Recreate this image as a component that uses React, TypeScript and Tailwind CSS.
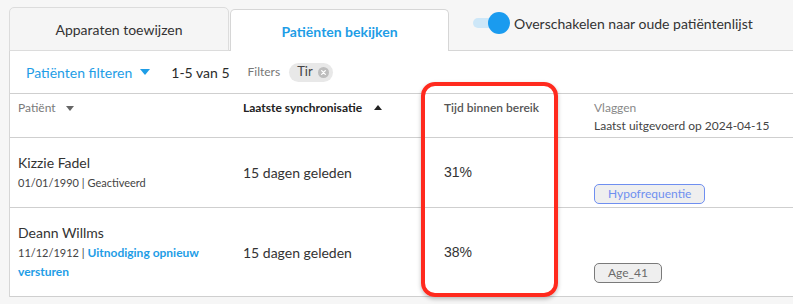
import React from "react";

const blue = "text-[#1e9de6]";

function CaretDown({ className }: { className?: string }) {
  return (
    <svg viewBox="0 0 10 6" className={className} fill="currentColor">
      <path d="M0 0h10L5 6z" />
    </svg>
  );
}

function CaretUp({ className }: { className?: string }) {
  return (
    <svg viewBox="0 0 10 6" className={className} fill="currentColor">
      <path d="M0 6h10L5 0z" />
    </svg>
  );
}

function Flag({ label, tone }: { label: string; tone: "blue" | "gray" }) {
  const cls =
    tone === "blue"
      ? "border-[#6f8ff0] text-[#6f8ff0]"
      : "border-[#7a7a7a] text-[#6a6a6a]";
  return (
    <span
      className={`inline-flex h-[20px] items-center rounded-[5px] border bg-[#efefef] px-[13px] text-[12px] ${cls}`}
    >
      {label}
    </span>
  );
}

const patients = [
  {
    name: "Kizzie Fadel",
    dob: "01/01/1990",
    status: "Geactiveerd",
    invite: false,
    sync: "15 dagen geleden",
    tir: "31%",
    flag: { label: "Hypofrequentie", tone: "blue" as const },
    height: "h-[70px]",
  },
  {
    name: "Deann Willms",
    dob: "11/12/1912",
    status: "Uitnodiging opnieuw versturen",
    invite: true,
    sync: "15 dagen geleden",
    tir: "38%",
    flag: { label: "Age_41", tone: "gray" as const },
    height: "h-[89px]",
  },
];

export default function App() {
  return (
    <div
      className="h-[304px] w-[793px] overflow-hidden bg-[#f6f6f6] pl-[9px] text-[#333]"
      style={{ fontFamily: "Lato, 'Noto Sans', sans-serif" }}
    >
      {/* Tabs */}
      <div className="flex h-[51px] items-end border-b border-[#d6d6d6]">
        <div className="-mb-px flex h-[44px] w-[220px] items-center justify-center rounded-t-[5px] border border-[#dcdcdc] bg-[#f5f5f5] text-[14px] text-[#333]">
          Apparaten toewijzen
        </div>
        <div
          className={`-mb-px ml-px flex h-[42px] w-[219px] items-center justify-center rounded-t-[5px] border border-b-0 border-[#d6d6d6] bg-white pt-px text-[14px] font-bold ${blue}`}
        >
          Patiënten bekijken
        </div>
        <div className="mb-[16px] ml-[24px] flex items-center self-end">
          <div className="relative h-[22px] w-[38px]">
            <div className="absolute left-0 top-[6px] h-[10px] w-[30px] rounded-full bg-[#cde7f8]" />
            <div className="absolute left-[15px] top-0 h-[22px] w-[22px] rounded-full bg-[#1a9bef]" />
          </div>
          <span className="ml-[3px] text-[14px] text-[#333]">
            Overschakelen naar oude patiëntenlijst
          </span>
        </div>
      </div>

      {/* Panel */}
      <div className="border-l border-[#d6d6d6] bg-white">
        {/* Filter row */}
        <div className="flex h-[43px] items-center border-b border-[#cfcfcf] pl-[16px]">
          <span className={`text-[14px] ${blue}`}>Patiënten filteren</span>
          <CaretDown className={`ml-[8px] h-[6px] w-[10px] ${blue}`} />
          <span className="ml-[21px] text-[14px] text-[#2a2a2a]">1-5 van 5</span>
          <span className="ml-[18px] text-[12px] text-[#777]">Filters</span>
          <span className="ml-[9px] inline-flex h-[19px] items-center rounded-full bg-[#e8e8e8] pl-[8px] pr-[4px] text-[13px] text-[#444]">
            Tir
            <svg viewBox="0 0 12 12" className="ml-[5px] h-[11px] w-[11px]">
              <circle cx="6" cy="6" r="6" fill="#bdbdbd" />
              <path d="M4 4l4 4M8 4l-4 4" stroke="#fff" strokeWidth="1.4" strokeLinecap="round" />
            </svg>
          </span>
        </div>

        {/* Table */}
        <div className="relative">
          <div className="grid h-[44px] grid-cols-[233px_201px_150px_1fr] border-b border-[#cfcfcf] pt-[5px] text-[12px] leading-[18px]">
            <div className="flex items-start pl-[8px]">
              <span className="text-[#7a7a7a]">Patiënt</span>
              <CaretDown className="ml-[10px] mt-[7px] h-[5px] w-[8px] text-[#666]" />
            </div>
            <div className="flex items-start">
              <span className="font-bold text-[#222]">Laatste synchronisatie</span>
              <CaretUp className="ml-[12px] mt-[6px] h-[5px] w-[8px] text-[#222]" />
            </div>
            <div className="font-semibold text-[#555]">Tijd binnen bereik</div>
            <div>
              <div className="text-[#888]">Vlaggen</div>
              <div className="text-[#444]">Laatst uitgevoerd op 2024-04-15</div>
            </div>
          </div>

          {patients.map((p) => (
            <div
              key={p.name}
              className={`grid grid-cols-[233px_201px_150px_1fr] border-b border-[#cfcfcf] ${p.height}`}
            >
              <div className="flex flex-col justify-center pl-[8px] pr-[28px]">
                <div className="text-[14px] leading-5 text-[#333]">{p.name}</div>
                <div className="text-[11px] leading-[19px] text-[#444]">
                  {p.dob} |{" "}
                  {p.invite ? (
                    <span className={`text-[12px] font-bold ${blue}`}>{p.status}</span>
                  ) : (
                    p.status
                  )}
                </div>
              </div>
              <div className="flex items-center text-[14px] text-[#333]">{p.sync}</div>
              <div
                className="flex items-center text-[14px] text-[#333]"
                style={{ fontFamily: "'Liberation Sans', Arial, sans-serif" }}
              >
                {p.tir}
              </div>
              <div className="flex items-center">
                <div className="pt-[38px]">
                  <Flag label={p.flag.label} tone={p.flag.tone} />
                </div>
              </div>
            </div>
          ))}

          {/* Highlight annotation */}
          <div className="pointer-events-none absolute left-[411px] top-[-12px] h-[215px] w-[137px] rounded-[14px] border-[4px] border-[#ff2a1e] shadow-[0_2px_4px_rgba(0,0,0,0.25)]" />
        </div>
      </div>
    </div>
  );
}
